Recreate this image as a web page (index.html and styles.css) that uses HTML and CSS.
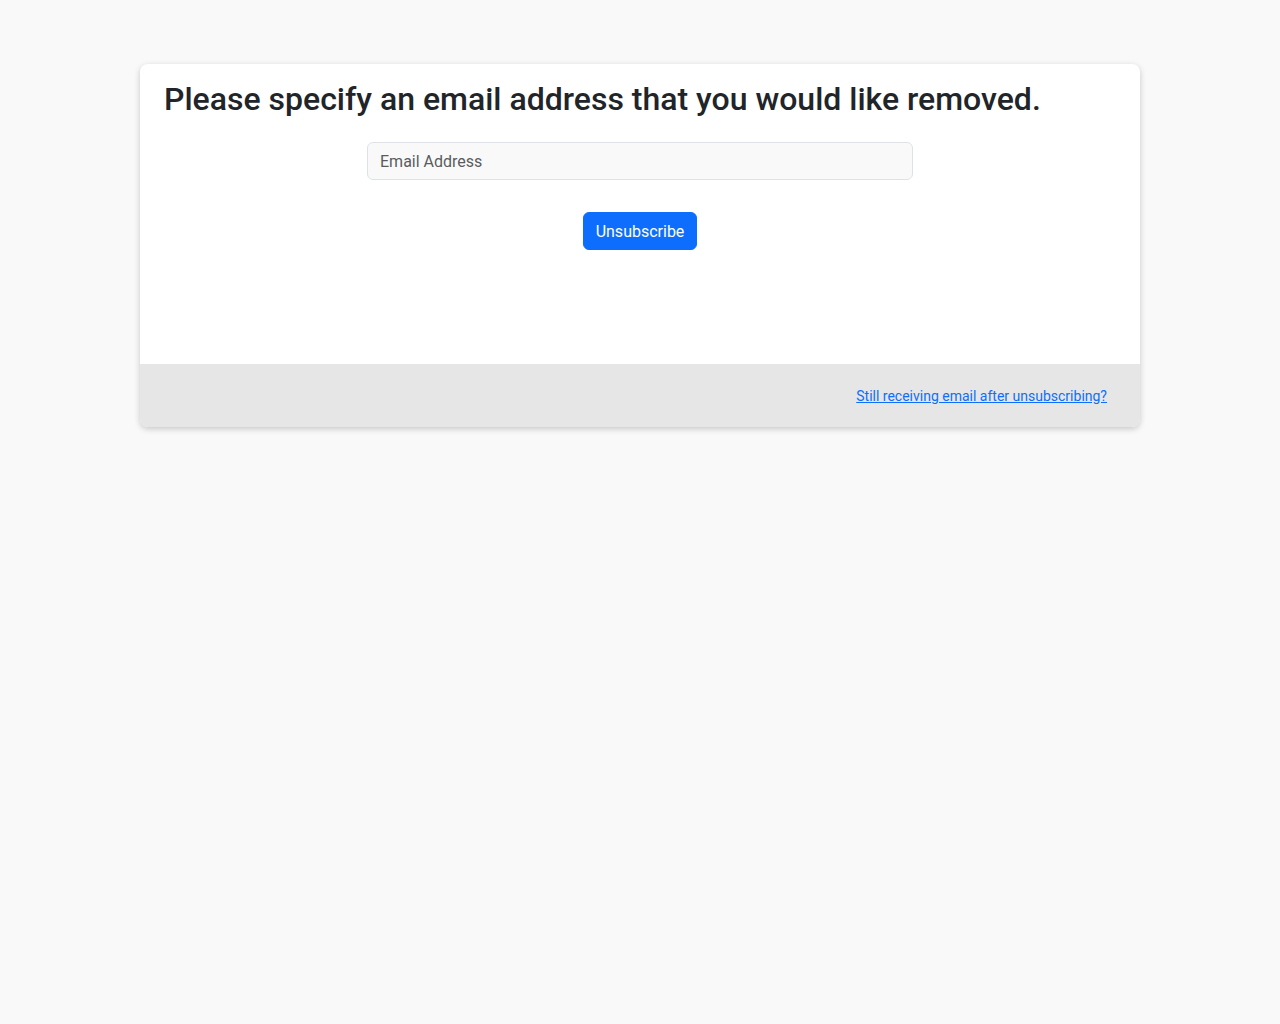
FILE: index.html
```html
<!DOCTYPE html>
<html lang="en">
<head>
  <meta charset="UTF-8">
  <meta name="viewport" content="width=device-width, initial-scale=1.0">
  <title>Unsubscribe</title>
  <link rel="stylesheet" href="styles.css">
</head>
<body>
  <div class="card">
    <div class="card-body">
      <h2>Please specify an email address that you would like removed.</h2>
      <form class="unsub-form">
        <input type="email" class="form-control" placeholder="Email Address">
        <button type="button" class="btn-primary">Unsubscribe</button>
      </form>
    </div>
    <div class="card-footer">
      <a href="#">Still receiving email after unsubscribing?</a>
    </div>
  </div>
</body>
</html>
```

FILE: styles.css
```css
body {
  margin: 0;
  padding: 64px 0;
  font-family: Roboto, "Liberation Sans", sans-serif;
  background: #f9f9f9;
  color: #212529;
}
.card {
  width: 1000px;
  margin: 0 auto;
  background: #fff;
  border-radius: 8px;
  overflow: hidden;
  box-shadow: 0 2px 6px rgba(0, 0, 0, 0.2);
}
.card-body {
  padding: 16px 24px 0;
  height: 300px;
  box-sizing: border-box;
}
h2 {
  margin: 0 0 24px;
  font-size: 32px;
  font-weight: 500;
  line-height: 1.2;
}
.unsub-form {
  display: flex;
  flex-direction: column;
  align-items: center;
  gap: 32px;
}
.form-control {
  width: 546px;
  height: 38px;
  box-sizing: border-box;
  padding: 6px 12px;
  font-family: inherit;
  font-size: 16px;
  color: #212529;
  background: #f9f9f9;
  border: 1px solid #dee2e6;
  border-radius: 6px;
}
.form-control::placeholder {
  color: #595c5f;
}
.btn-primary {
  height: 38px;
  padding: 6px 12px;
  font-family: inherit;
  font-size: 16px;
  color: #fff;
  background: #0d6efd;
  border: 1px solid #0d6efd;
  border-radius: 6px;
  cursor: pointer;
}
.card-footer {
  background: #e6e6e6;
  height: 63px;
  padding: 0 33px;
  display: flex;
  align-items: center;
  justify-content: flex-end;
}
.card-footer a {
  font-size: 14px;
  color: #0d6efd;
}
```
